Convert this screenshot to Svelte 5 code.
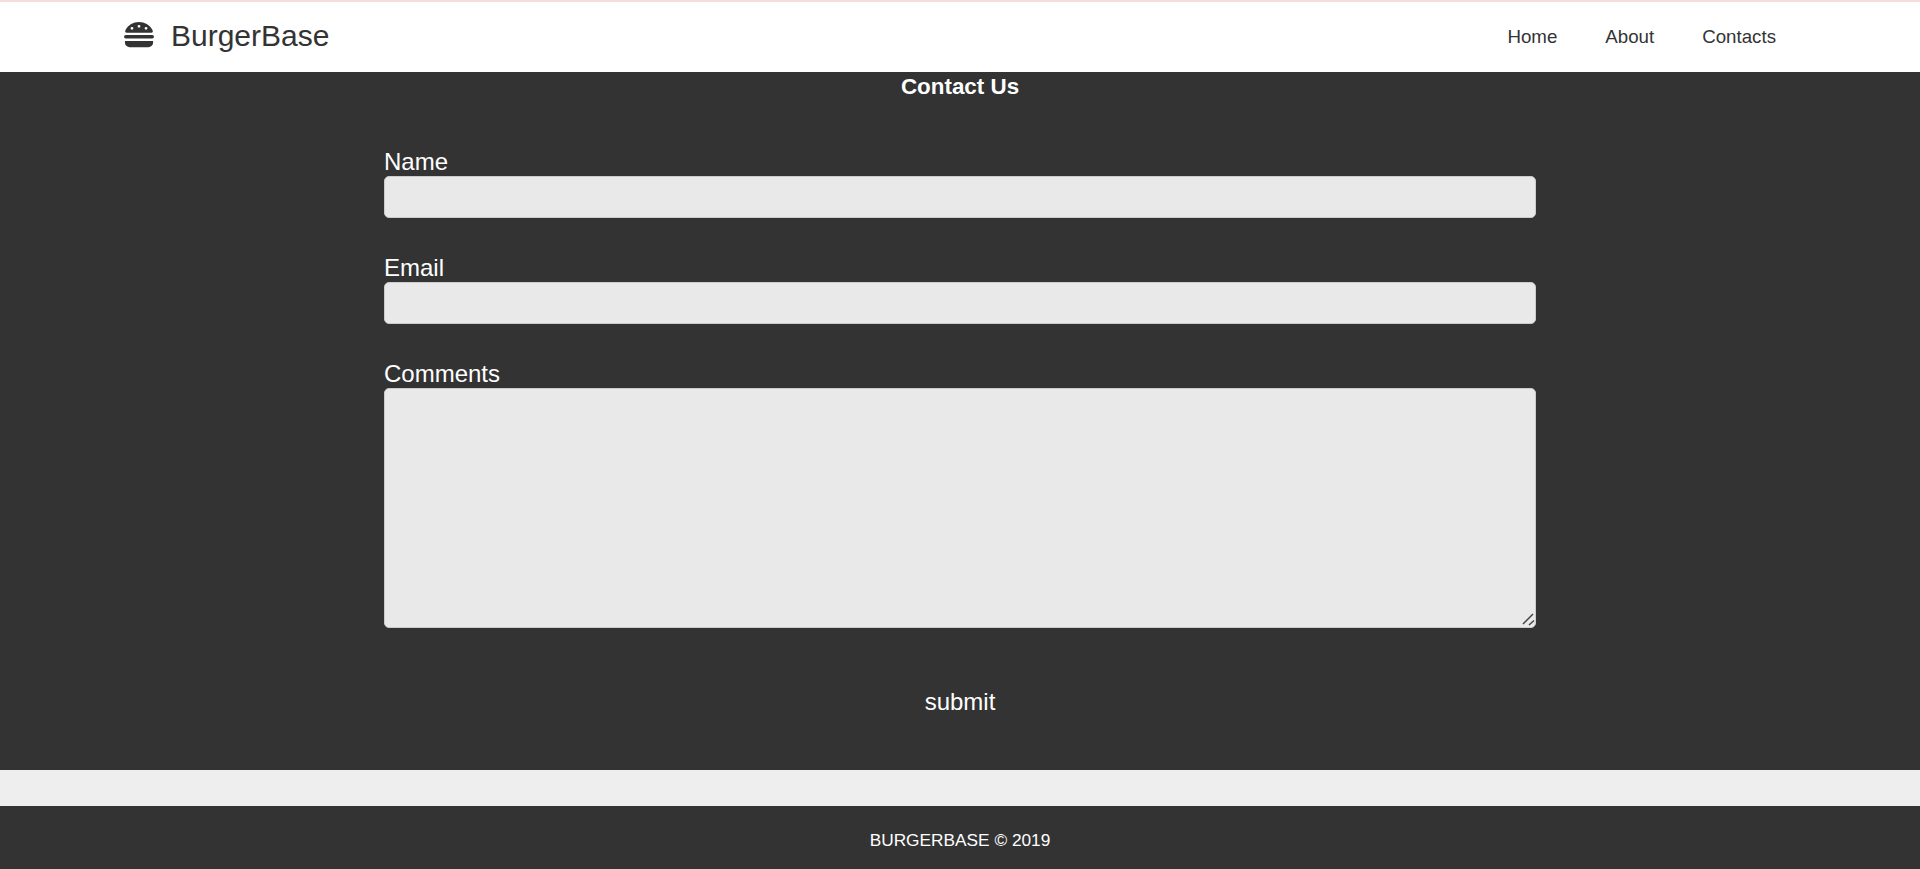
<script lang="ts">
  const links = ["Home", "About", "Contacts"];
</script>

<header class="nav">
  <a class="brand" href="#home">
    <svg class="burger" viewBox="0 0 32 30" preserveAspectRatio="none" aria-hidden="true">
      <path
        fill-rule="evenodd"
        d="M3 12.500C1 12.500 .8 10.500 1.800 9 4.500 3.500 10 0 16 0s11.500 3.500 14.200 9c1 1.500.8 3.500-1.200 3.500zM8.500 5.800a1.500 1.500 0 1 0 0 3 1.500 1.500 0 0 0 0-3zM16 3.500a1.500 1.500 0 1 0 0 3 1.500 1.500 0 0 0 0-3zM23.500 5.800a1.500 1.500 0 1 0 0 3 1.500 1.500 0 0 0 0-3z"
      />
      <rect x="0" y="15" width="32" height="4" rx="2" />
      <path d="M1 22h30v2a5 5 0 0 1-5 5H6a5 5 0 0 1-5-5z" />
    </svg>
    <span>BurgerBase</span>
  </a>
  <nav class="links">
    {#each links as link}
      <a href="#{link.toLowerCase()}">{link}</a>
    {/each}
  </nav>
</header>

<main class="contact">
  <h1>Contact Us</h1>
  <form on:submit|preventDefault>
    <div class="field">
      <label for="name">Name</label>
      <input id="name" type="text" />
    </div>
    <div class="field">
      <label for="email">Email</label>
      <input id="email" type="email" />
    </div>
    <div class="field">
      <label for="comments">Comments</label>
      <div class="area">
        <textarea id="comments"></textarea>
        <svg class="grip" viewBox="0 0 16 16" aria-hidden="true">
          <path d="M3 12 13 2M9 13l5-4.500" />
        </svg>
      </div>
    </div>
    <button type="submit">submit</button>
  </form>
</main>

<div class="spacer"></div>

<footer>BURGERBASE © 2019</footer>

<style>
  :global(body) {
    background: #eee;
    font-family: "Liberation Sans", Arial, sans-serif;
  }
  .nav {
    display: flex;
    align-items: center;
    justify-content: space-between;
    height: 70px;
    padding: 0 144px 0 124px;
    background: #fff;
    border-top: 2px solid #f8dcd9;
  }
  .brand {
    display: flex;
    align-items: center;
    gap: 17px;
    padding-bottom: 2px;
    color: #333;
    font-size: 30px;
    text-decoration: none;
  }
  .burger {
    width: 30px;
    height: 26px;
    margin-bottom: 2px;
    fill: #333;
  }
  .links {
    display: flex;
    gap: 48px;
  }
  .links a {
    color: #333;
    font-size: 18.72px;
    text-decoration: none;
  }
  .contact {
    height: 698px;
    box-sizing: border-box;
    background: #333;
    color: #fff;
  }
  h1 {
    margin: 0;
    padding-top: 2px;
    font-size: 22.4px;
    line-height: 26px;
    text-align: center;
  }
  form {
    display: flex;
    flex-direction: column;
    width: 1152px;
    margin: 0 auto;
    padding-top: 48px;
  }
  .field {
    margin-bottom: 36px;
  }
  label {
    display: block;
    font-size: 24px;
    line-height: 28px;
  }
  input,
  textarea {
    display: block;
    width: 100%;
    box-sizing: border-box;
    margin: 0;
    background: #e9e9e9;
    border: 1px solid #ccc;
    border-radius: 5px;
    outline: none;
  }
  input {
    height: 42px;
  }
  .area {
    position: relative;
  }
  textarea {
    height: 240px;
    resize: none;
  }
  .grip {
    position: absolute;
    right: 0;
    bottom: 0;
    width: 16px;
    height: 16px;
    fill: none;
    stroke: #444;
    stroke-width: 1.5;
  }
  button {
    align-self: center;
    margin-top: 24px;
    padding: 0;
    background: none;
    border: none;
    color: #fff;
    font-family: inherit;
    font-size: 24px;
  }
  .spacer {
    height: 36px;
    background: #eee;
  }
  footer {
    height: 63px;
    background: #333;
    color: #fff;
    font-size: 17.28px;
    line-height: 68px;
    text-align: center;
  }
</style>
